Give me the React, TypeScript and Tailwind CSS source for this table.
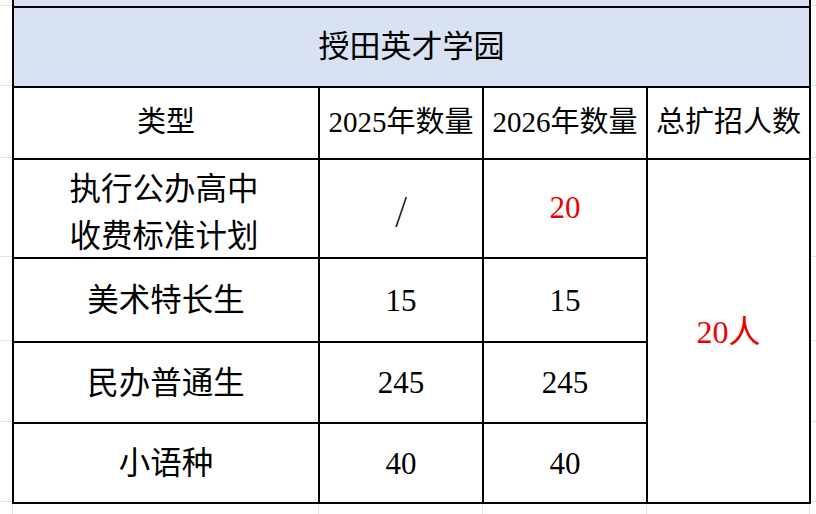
const ROWS = [80, 72, 99, 84, 81, 80]
const ROW_H = ["h-[80px]", "h-[72px]", "h-[99px]", "h-[84px]", "h-[81px]", "h-[80px]"]

function MarginColumn({ className }: { className: string }) {
  return (
    <div className={`flex flex-col ${className}`}>
      {ROWS.map((_, i) => (
        <div key={i} className={`${ROW_H[i]} border-b border-[#e3e3e3]`} />
      ))}
    </div>
  )
}

function Cell({
  children,
  className = "",
}: {
  children?: React.ReactNode
  className?: string
}) {
  return (
    <div
      className={`flex items-center justify-center border-r-2 border-b-2 border-black text-center ${className}`}
    >
      {children}
    </div>
  )
}

const data = [
  { type: "美术特长生", y2025: "15", y2026: "15" },
  { type: "民办普通生", y2025: "245", y2026: "245" },
  { type: "小语种", y2025: "40", y2026: "40" },
]

export default function App() {
  return (
    <div className="w-[816px] h-[514px] bg-white overflow-hidden flex flex-col text-black font-['Liberation_Serif','Noto_Sans_CJK_SC',serif]">
      {/* top strip: end of the previous blue row */}
      <div className="flex h-[6px] shrink-0">
        <div className="w-[12px] border-b border-[#e3e3e3]" />
        <div className="w-[799px] bg-[#d9e2f3] border-x-2 border-black" />
        <div className="flex-1 border-b border-[#e3e3e3]" />
      </div>

      <div className="flex shrink-0">
        <MarginColumn className="w-[12px]" />

        <div className="w-[799px] grid grid-cols-[306px_164px_164px_163px] grid-rows-[80px_72px_99px_84px_81px_80px] border-l-2 border-t-2 border-black text-[29px]">
          <Cell className="col-span-4 bg-[#d9e2f3] text-[31px]">授田英才学园</Cell>

          <Cell>类型</Cell>
          <Cell>2025年数量</Cell>
          <Cell>2026年数量</Cell>
          <Cell>总扩招人数</Cell>

          <Cell className="flex-col leading-[47px] pr-[4px] pt-[8px] text-[31.5px]">
            <span>执行公办高中</span>
            <span>收费标准计划</span>
          </Cell>
          <Cell className="text-[31px] font-['Noto_Sans_CJK_SC',sans-serif] font-light">/</Cell>
          <Cell className="text-[#ec0000] text-[31px]">20</Cell>
          <Cell className="row-span-4 text-[#ec0000] text-[32px] pt-[2px]">20人</Cell>

          {data.map((row) => (
            <div key={row.type} className="contents">
              <Cell className="text-[31.5px] pt-[2px]">{row.type}</Cell>
              <Cell className="text-[31px] pt-[2px]">{row.y2025}</Cell>
              <Cell className="text-[31px] pt-[2px]">{row.y2026}</Cell>
            </div>
          ))}
        </div>

        <MarginColumn className="flex-1" />
      </div>

      {/* spreadsheet gridlines below the table */}
      <div className="flex flex-1">
        <div className="w-[13px] border-r border-[#e3e3e3]" />
        <div className="w-[306px] border-r border-[#e3e3e3]" />
        <div className="w-[164px] border-r border-[#e3e3e3]" />
        <div className="w-[164px] border-r border-[#e3e3e3]" />
        <div className="w-[163px] border-r border-[#e3e3e3]" />
      </div>
    </div>
  )
}
